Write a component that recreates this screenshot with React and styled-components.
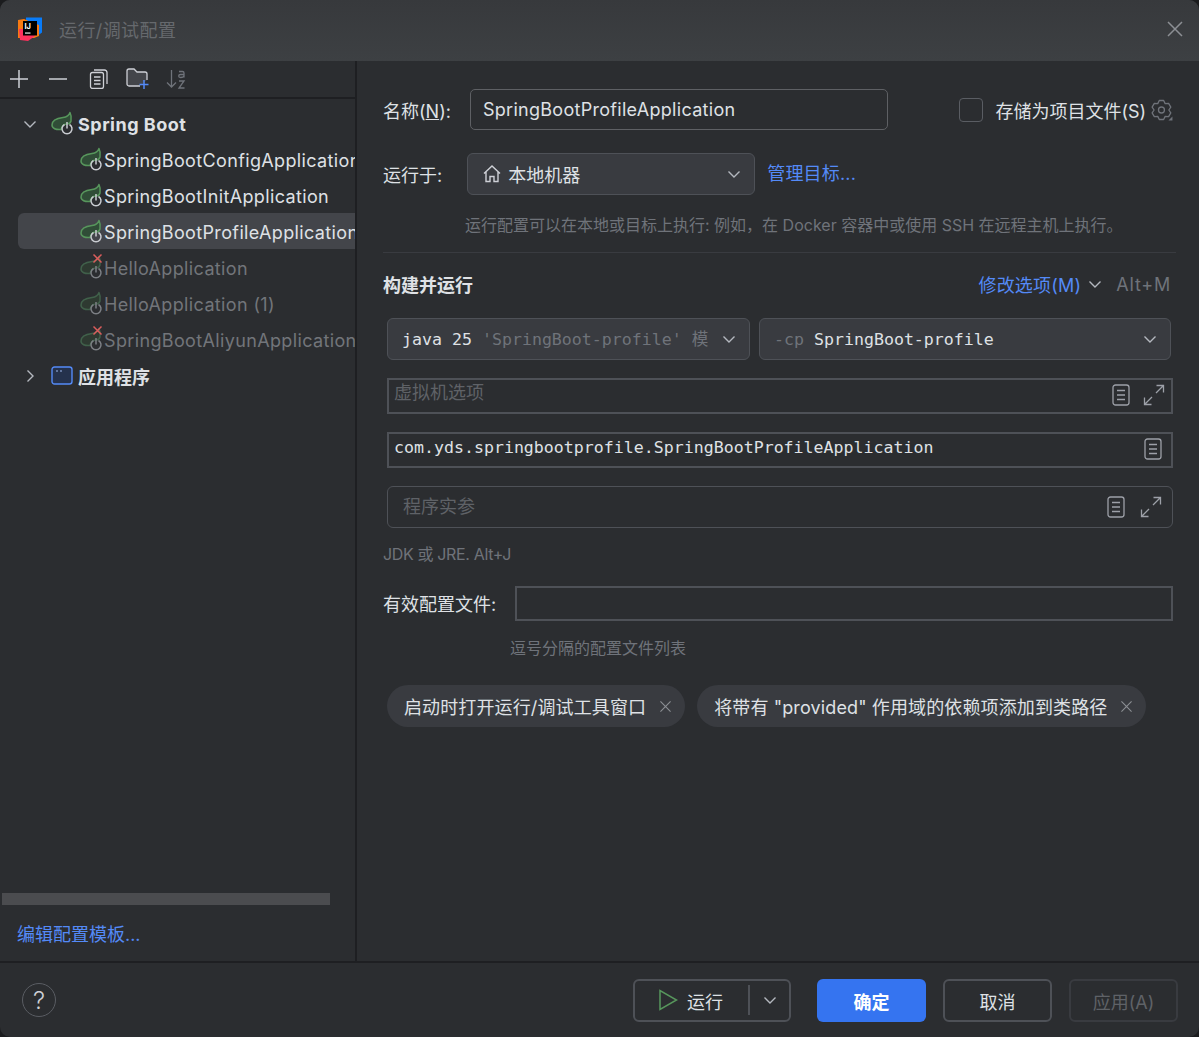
import styled, { createGlobalStyle } from "styled-components";

const SANS = `Inter, "Noto Sans CJK SC", sans-serif`;
const MONO = `"DejaVu Sans Mono", "Noto Sans CJK SC", monospace`;

const GlobalStyle = createGlobalStyle`
  html, body { margin: 0; padding: 0; background: #1b1c1e; }
  * { box-sizing: border-box; }
`;

const Dialog = styled.div`
  width: 1199px;
  height: 1037px;
  display: flex;
  flex-direction: column;
  background: #2b2d30;
  border-radius: 10px;
  overflow: hidden;
  font-family: ${SANS};
  font-size: 18px;
  color: #dfe1e5;
`;

const TitleBar = styled.div`
  height: 61px;
  flex: none;
  display: flex;
  align-items: center;
  padding: 0 15px 3px 18px;
  background: linear-gradient(#37393c, #3d4043);
`;

const Title = styled.div`
  margin-left: 17px;
  letter-spacing: 0.4px;
  color: #66696d;
  flex: 1;
`;

const Body = styled.div`
  flex: 1;
  display: flex;
  min-height: 0;
`;

const Sidebar = styled.div`
  width: 357px;
  flex: none;
  display: flex;
  flex-direction: column;
  border-right: 2px solid #1e1f22;
`;

const Toolbar = styled.div`
  height: 38px;
  flex: none;
  display: flex;
  align-items: center;
  padding-left: 9px;
  gap: 19px;
  border-bottom: 2px solid #1e1f22;
`;

const ToolSlot = styled.span`
  display: flex;
  margin-left: ${(p) => p.$nudge}px;
`;

const Tree = styled.div`
  flex: 1;
  padding-top: 6px;
  overflow: hidden;
`;

const Row = styled.div`
  height: 36px;
  margin-left: 18px;
  display: flex;
  align-items: center;
  padding-top: 2px;
  padding-left: ${(p) => (p.$leaf ? "60px" : "4px")};
  white-space: nowrap;
  letter-spacing: ${(p) => (p.$leaf ? "0.36px" : p.$latin ? "0.5px" : "0")};
  font-weight: ${(p) => (p.$group ? 700 : 400)};
  color: ${(p) => (p.$dim ? "#72757a" : "#dfe1e5")};
  background: ${(p) => (p.$selected ? "#43454a" : "transparent")};
  border-radius: 6px 0 0 6px;
  overflow: hidden;
`;

const Arrow = styled.span`
  width: 27px;
  flex: none;
  display: flex;
  align-items: center;
`;

const IconSlot = styled.span`
  position: relative;
  width: 26px;
  height: 26px;
  flex: none;
  display: block;
`;

const GroupSlot = styled(IconSlot)`
  display: flex;
  align-items: center;
  justify-content: center;
  margin-right: 3px;
`;

const ErrorMark = styled.svg`
  position: absolute;
  top: -2px;
  left: 14px;
`;

const ScrollArea = styled.div`
  height: 12px;
  flex: none;
  margin: 0 25px 0 2px;
  background: #4b4c4f;
`;

const TemplateLink = styled.a`
  flex: none;
  height: 56px;
  padding: 15px 0 0 17px;
  color: #548af7;
`;

const Panel = styled.div`
  flex: 1;
  padding: 28px 26px 0 26px;
  display: flex;
  flex-direction: column;
  min-width: 0;
`;

const NameRow = styled.div`
  display: flex;
  align-items: center;
  height: 41px;
`;

const FieldLabel = styled.span`
  white-space: nowrap;
  flex: none;
`;

const NameInput = styled.div`
  width: 420px;
  height: 41px;
  margin-left: 19px;
  padding-left: 12px;
  display: flex;
  align-items: center;
  letter-spacing: 0.29px;
  border: 1px solid #5e6064;
  border-radius: 5px;
`;

const Check = styled.span`
  width: 24px;
  height: 24px;
  margin-left: 71px;
  border: 1px solid #5a5d63;
  border-radius: 4px;
  flex: none;
`;

const CheckLabel = styled.span`
  margin: 0 5px 0 12px;
  white-space: nowrap;
`;

const RunRow = styled.div`
  display: flex;
  align-items: center;
  height: 42px;
  margin-top: 23px;
`;

const Select = styled.div`
  height: 42px;
  width: ${(p) => p.$w}px;
  margin-left: ${(p) => p.$ml || 0}px;
  flex: none;
  display: flex;
  align-items: center;
  justify-content: space-between;
  padding: 0 12px 0 14px;
  background: #393b40;
  border: 1px solid #4e5157;
  border-radius: 6px;
  white-space: nowrap;
  overflow: hidden;
`;

const SelectValue = styled.span`
  display: flex;
  align-items: center;
  gap: 6px;
`;

const SelectMono = styled.span`
  margin-top: -2px;
`;

const BlueLink = styled.a`
  color: #548af7;
  white-space: nowrap;
  letter-spacing: 0.2px;
`;

const ManageLink = styled(BlueLink)`
  margin: -4px 0 0 12px;
`;

const Hint = styled.div`
  font-size: 16px;
  line-height: 24px;
  color: #6f737a;
  margin-top: ${(p) => p.$mt}px;
  margin-left: ${(p) => p.$ml || 0}px;
  white-space: nowrap;
`;

const TightHint = styled(Hint)`
  letter-spacing: -0.35px;
`;

const Divider = styled.div`
  height: 1px;
  margin-top: 15px;
  background: #393b40;
  width: 793px;
`;

const SectionHead = styled.div`
  display: flex;
  align-items: center;
  height: 24px;
  margin-top: 19px;
`;

const SectionTitle = styled.div`
  font-weight: 700;
  flex: 1;
`;

const HeadChevron = styled.span`
  display: flex;
  margin-left: 6px;
`;

const Shortcut = styled.span`
  color: #6f737a;
  letter-spacing: 0.8px;
  margin-left: 13px;
  margin-right: 2px;
`;

const FieldBlock = styled.div`
  margin-left: 4px;
  display: flex;
  flex-direction: column;
`;

const SelectRow = styled(FieldBlock)`
  flex-direction: row;
  margin-top: 22px;
  gap: 9px;
`;

const Mono = styled.span`
  font-family: ${MONO};
  font-size: 16.6px;
  white-space: pre;
  color: ${(p) => (p.$dim ? "#6f737a" : "#dfe1e5")};
`;

const ClassName = styled(Mono)`
  margin-top: 4px;
`;

const Field = styled.div`
  height: ${(p) => (p.$round ? 42 : 36)}px;
  margin-top: 18px;
  display: flex;
  align-items: ${(p) => (p.$round ? "center" : "flex-start")};
  justify-content: space-between;
  padding: ${(p) => (p.$round ? "0 10px 0 15px" : `0 ${p.$pr}px 0 5px`)};
  border: ${(p) => (p.$round ? "1px" : "2px")} solid #4e5157;
  border-radius: ${(p) => (p.$round ? "6px" : "0")};
  background: #2b2d30;
`;

const Placeholder = styled.span`
  color: #5f6267;
  line-height: 26px;
`;

const FieldIcons = styled.span`
  display: flex;
  align-items: center;
  gap: ${(p) => (p.$round ? 15 : 13)}px;
  padding-top: ${(p) => (p.$round ? 0 : 4)}px;
`;

const ProfileRow = styled.div`
  display: flex;
  align-items: center;
  margin-top: 20px;
  height: 35px;
`;

const ProfileLabel = styled(FieldLabel)`
  margin-top: -2px;
`;

const ProfileInput = styled.div`
  width: 658px;
  height: 35px;
  margin-left: 19px;
  border: 2px solid #4e5157;
`;

const Tags = styled.div`
  display: flex;
  gap: 12px;
  margin: 25px 0 0 4px;
`;

const Tag = styled.div`
  height: 42px;
  display: flex;
  align-items: center;
  gap: 13px;
  padding: 0 13px 0 17px;
  border-radius: 21px;
  letter-spacing: 0.12px;
  background: #393b40;
  white-space: nowrap;
`;

const Footer = styled.div`
  height: 76px;
  flex: none;
  display: flex;
  align-items: center;
  padding: 0 21px 0 22px;
  border-top: 2px solid #1e1f22;
`;

const Help = styled.div`
  width: 34px;
  height: 34px;
  border: 1px solid #5a5d63;
  border-radius: 50%;
  display: flex;
  align-items: center;
  justify-content: center;
  font-size: 24px;
  font-weight: 300;
  color: #ced0d6;
  margin-right: auto;
`;

const Button = styled.div`
  width: ${(p) => p.$w}px;
  height: 43px;
  margin-left: ${(p) => p.$ml}px;
  padding-top: 2px;
  display: flex;
  align-items: center;
  justify-content: center;
  border-radius: 6px;
  border: ${(p) => (p.$primary ? "none" : `2px solid ${p.$off ? "#393b40" : "#4e5157"}`)};
  background: ${(p) => (p.$primary ? "#3574f0" : "transparent")};
  color: ${(p) => (p.$primary ? "#fff" : p.$off ? "#5f6267" : "#dfe1e5")};
  font-weight: ${(p) => (p.$primary ? 700 : 400)};
`;

const RunButton = styled(Button)`
  justify-content: flex-start;
  padding: 0 0 0 23px;
`;

const RunLabel = styled.span`
  margin: 2px 0 0 9px;
  width: 61px;
`;

const RunSplit = styled.span`
  width: 2px;
  height: 30px;
  background: #4e5157;
`;

const RunArrow = styled.span`
  flex: 1;
  display: flex;
  justify-content: center;
`;

const Chevron = ({ size = 16, color = "#b4b8bf", dir = "down" }) => (
  <svg width={size} height={size} viewBox="0 0 16 16" fill="none" stroke={color} strokeWidth="1.4">
    {dir === "down" ? <path d="M2.5 5.5 8 11l5.5-5.5" /> : <path d="M5.5 2.5 11 8l-5.5 5.5" />}
  </svg>
);

const Close = ({ size = 18, color = "#8c8f94" }) => (
  <svg width={size} height={size} viewBox="0 0 18 18" fill="none" stroke={color} strokeWidth="1.5">
    <path d="M2 2l14 14M16 2 2 16" />
  </svg>
);

const Logo = () => (
  <svg width="24" height="24" viewBox="0 0 24 24">
    <path d="M8 0.500h16v15l-4 3H8z" fill="#087cfa" />
    <path d="M0 3l6-1 9 4 6 2v11l-5 2H0z" fill="#f97a12" />
    <path d="M1 12h12l4 7-7 5-8-1z" fill="#fe315d" />
    <rect x="5" y="4" width="14" height="14.500" fill="#000" />
    <rect x="7" y="15.500" width="5.500" height="1.100" fill="#fff" />
    <text x="6.500" y="12" fontSize="7.500" fontWeight="700" fontFamily="Inter, sans-serif" fill="#fff">
      IJ
    </text>
  </svg>
);

const SpringIcon = ({ dim }) => (
  <svg width="26" height="26" viewBox="0 0 26 26" fill="none">
    <path
      d="M21 1.500c-1 3-3 4.500-7 5C8 7.200 3 9.500 3 14c0 3.500 4 5 9 4.500 1-4 3-5.500 6-5.500 2 0 3.500-1 4-3 .5-3 .3-6-1-8.500z"
      fill={dim ? "#2e3a31" : "#304d37"}
      stroke={dim ? "#40604a" : "#57965c"}
      strokeWidth="1.500"
      strokeLinejoin="round"
    />
    <g stroke={dim ? "#7c7f84" : "#c9ccd1"} strokeWidth="1.500">
      <path d="M15.500 13.500a5 5 0 1 0 5 0" />
      <path d="M18 11v6.500" />
    </g>
  </svg>
);

const ErrorBadge = () => (
  <ErrorMark width="11" height="11" viewBox="0 0 11 11" stroke="#db5c5c" strokeWidth="1.500">
    <path d="M1.500 1.500l8 8M9.500 1.500l-8 8" />
  </ErrorMark>
);

const AppIcon = () => (
  <svg width="22" height="20" viewBox="0 0 22 20" fill="none">
    <rect x="1" y="1" width="20" height="17" rx="2.500" fill="#25324d" stroke="#548af7" strokeWidth="1.400" />
    <path d="M5 5h2M9 5h2" stroke="#9db8f0" strokeWidth="1.200" />
  </svg>
);

const Plus = () => (
  <svg width="20" height="20" viewBox="0 0 20 20" stroke="#ced0d6" strokeWidth="1.500">
    <path d="M10 1v18M1 10h18" />
  </svg>
);

const Minus = () => (
  <svg width="20" height="20" viewBox="0 0 20 20" stroke="#ced0d6" strokeWidth="1.500">
    <path d="M1 10h18" />
  </svg>
);

const CopyIcon = () => (
  <svg width="20" height="20" viewBox="0 0 20 20" fill="none" stroke="#ced0d6" strokeWidth="1.300">
    <rect x="1.500" y="3.500" width="13" height="16" rx="2" />
    <path d="M5 1h10.500a2.500 2.500 0 0 1 2.500 2.500V15M5 8h6.500M5 11.500h6.500M5 15h6.500" />
  </svg>
);

const FolderPlus = () => (
  <svg width="24" height="22" viewBox="0 0 24 22" fill="none">
    <path
      d="M14 18H3a2 2 0 0 1-2-2V3a2 2 0 0 1 2-2h5l3 3h8a2 2 0 0 1 2 2v6"
      fill="#43454a"
      stroke="#ced0d6"
      strokeWidth="1.300"
    />
    <path d="M18 12v9M13.500 16.500h9" stroke="#548af7" strokeWidth="1.500" />
  </svg>
);

const SortIcon = () => (
  <svg width="20" height="22" viewBox="0 0 20 22" fill="none" stroke="#6f737a" strokeWidth="1.300">
    <path d="M5.500 2v17M1 14.500 5.500 19l4.500-4.500" />
    <path d="M13 3.500h3.500c1 0 1.500.5 1.500 1.500v4.500M18 6.500h-3.500c-1 0-1.800.5-1.800 1.500s.8 1.500 1.800 1.500c1.500 0 3.500-.8 3.500-2M13 13h5l-5 7h5.500" />
  </svg>
);

const Home = () => (
  <svg width="20" height="20" viewBox="0 0 20 20" fill="none" stroke="#ced0d6" strokeWidth="1.400">
    <path d="M2 9.500 10 2l8 7.500M4 8v9.500h4v-5h4v5h4V8" />
  </svg>
);

// six lobed cog, computed so the lobes stay even
const gearPath = () => {
  const pts = [];
  for (let k = 0; k < 6; k++) {
    const a = -90 + k * 60;
    [[-13, 9.8], [13, 9.8], [30, 7.4]].forEach(([d, r]) => {
      const t = ((a + d) * Math.PI) / 180;
      pts.push(`${(10.5 + r * Math.cos(t)).toFixed(2)} ${(11 + r * Math.sin(t)).toFixed(2)}`);
    });
  }
  return `M${pts.join("L")}Z`;
};

const Gear = () => (
  <svg width="22" height="22" viewBox="0 0 22 22" fill="none" stroke="#6f737a" strokeWidth="1.300" strokeLinejoin="round">
    <path d={gearPath()} />
    <circle cx="10.500" cy="11" r="3" />
    <path d="M21.500 17.500v4h-4z" fill="#6f737a" stroke="none" />
  </svg>
);

const NoteIcon = () => (
  <svg width="18" height="22" viewBox="0 0 18 22" fill="none" stroke="#9da0a8" strokeWidth="1.300">
    <rect x="1" y="1" width="16" height="20" rx="2.500" />
    <path d="M5 6.500h8M5 11h8M5 15.500h8" />
  </svg>
);

const ExpandIcon = () => (
  <svg width="22" height="22" viewBox="0 0 22 22" fill="none" stroke="#9da0a8" strokeWidth="1.300">
    <path d="M13.500 1.500h7v7M20.500 1.500l-7.500 7.500M1.500 13.500v7h7M1.500 20.500 9 13" />
  </svg>
);

const PlayIcon = () => (
  <svg width="20" height="22" viewBox="0 0 20 22" fill="none" stroke="#57965c" strokeWidth="1.500">
    <path d="M2 1.500v19L18.500 11z" />
  </svg>
);

const configs = [
  { name: "SpringBootConfigApplication" },
  { name: "SpringBootInitApplication" },
  { name: "SpringBootProfileApplication", selected: true },
  { name: "HelloApplication", dim: true, error: true },
  { name: "HelloApplication (1)", dim: true },
  { name: "SpringBootAliyunApplication", dim: true, error: true },
];

const App = () => (
  <>
    <GlobalStyle />
    <Dialog>
      <TitleBar>
        <Logo />
        <Title>运行/调试配置</Title>
        <Close />
      </TitleBar>
      <Body>
        <Sidebar>
          <Toolbar>
            <Plus />
            <Minus />
            <ToolSlot $nudge={2}>
              <CopyIcon />
            </ToolSlot>
            <ToolSlot $nudge={-2}>
              <FolderPlus />
            </ToolSlot>
            <ToolSlot $nudge={-3}>
              <SortIcon />
            </ToolSlot>
          </Toolbar>
          <Tree>
            <Row $group $latin>
              <Arrow>
                <Chevron />
              </Arrow>
              <GroupSlot>
                <SpringIcon />
              </GroupSlot>
              Spring Boot
            </Row>
            {configs.map((c) => (
              <Row key={c.name} $leaf $dim={c.dim} $selected={c.selected}>
                <IconSlot>
                  <SpringIcon dim={c.dim} />
                  {c.error && <ErrorBadge />}
                </IconSlot>
                {c.name}
              </Row>
            ))}
            <Row $group>
              <Arrow>
                <Chevron dir="right" />
              </Arrow>
              <GroupSlot>
                <AppIcon />
              </GroupSlot>
              应用程序
            </Row>
          </Tree>
          <ScrollArea />
          <TemplateLink>编辑配置模板...</TemplateLink>
        </Sidebar>
        <Panel>
          <NameRow>
            <FieldLabel>
              名称(<u>N</u>):
            </FieldLabel>
            <NameInput>SpringBootProfileApplication</NameInput>
            <Check />
            <CheckLabel>存储为项目文件(S)</CheckLabel>
            <Gear />
          </NameRow>
          <RunRow>
            <FieldLabel>运行于:</FieldLabel>
            <Select $w={288} $ml={25}>
              <SelectValue>
                <Home />
                本地机器
              </SelectValue>
              <Chevron />
            </Select>
            <ManageLink>管理目标...</ManageLink>
          </RunRow>
          <Hint $mt={18} $ml={82}>
            运行配置可以在本地或目标上执行: 例如，在 Docker 容器中或使用 SSH 在远程主机上执行。
          </Hint>
          <Divider />
          <SectionHead>
            <SectionTitle>构建并运行</SectionTitle>
            <BlueLink>修改选项(M)</BlueLink>
            <HeadChevron>
              <Chevron />
            </HeadChevron>
            <Shortcut>Alt+M</Shortcut>
          </SectionHead>
          <SelectRow>
            <Select $w={363}>
              <SelectMono>
                <Mono>java 25 </Mono>
                <Mono $dim>&#39;SpringBoot-profile&#39; 模</Mono>
              </SelectMono>
              <Chevron />
            </Select>
            <Select $w={412}>
              <SelectMono>
                <Mono $dim>-cp </Mono>
                <Mono>SpringBoot-profile</Mono>
              </SelectMono>
              <Chevron />
            </Select>
          </SelectRow>
          <FieldBlock>
            <Field $pr={6}>
              <Placeholder>虚拟机选项</Placeholder>
              <FieldIcons>
                <NoteIcon />
                <ExpandIcon />
              </FieldIcons>
            </Field>
            <Field $pr={9}>
              <ClassName>com.yds.springbootprofile.SpringBootProfileApplication</ClassName>
              <FieldIcons>
                <NoteIcon />
              </FieldIcons>
            </Field>
            <Field $round>
              <Placeholder>程序实参</Placeholder>
              <FieldIcons $round>
                <NoteIcon />
                <ExpandIcon />
              </FieldIcons>
            </Field>
          </FieldBlock>
          <TightHint $mt={14}>JDK 或 JRE. Alt+J</TightHint>
          <ProfileRow>
            <ProfileLabel>有效配置文件:</ProfileLabel>
            <ProfileInput />
          </ProfileRow>
          <Hint $mt={15} $ml={127}>
            逗号分隔的配置文件列表
          </Hint>
          <Tags>
            <Tag>
              启动时打开运行/调试工具窗口
              <Close size={13} />
            </Tag>
            <Tag>
              将带有 &quot;provided&quot; 作用域的依赖项添加到类路径
              <Close size={13} />
            </Tag>
          </Tags>
        </Panel>
      </Body>
      <Footer>
        <Help>?</Help>
        <RunButton $w={158} $ml={0}>
          <PlayIcon />
          <RunLabel>运行</RunLabel>
          <RunSplit />
          <RunArrow>
            <Chevron />
          </RunArrow>
        </RunButton>
        <Button $w={109} $ml={26} $primary>
          确定
        </Button>
        <Button $w={109} $ml={17}>
          取消
        </Button>
        <Button $w={109} $ml={17} $off>
          应用(A)
        </Button>
      </Footer>
    </Dialog>
  </>
);

export default App;
